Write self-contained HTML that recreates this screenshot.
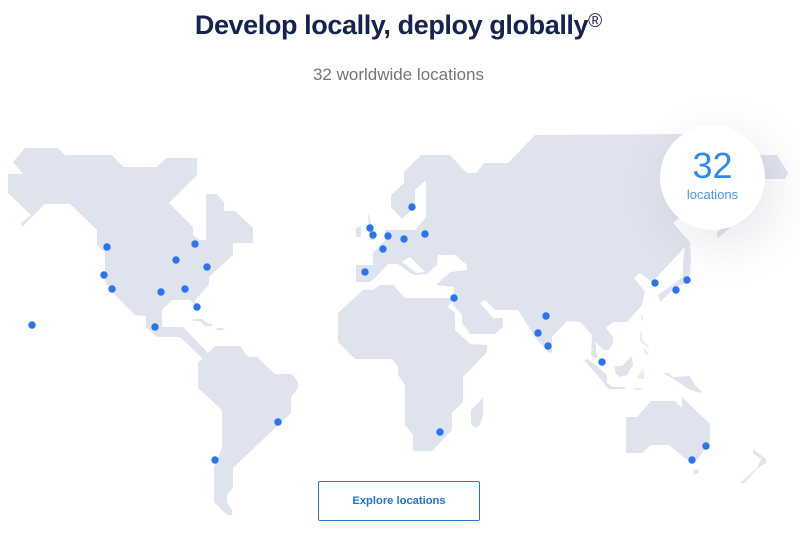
<!DOCTYPE html>
<html><head><meta charset="utf-8"><style>
html,body{margin:0;padding:0;background:#fff}
body{width:800px;height:536px;overflow:hidden;position:relative;font-family:"Liberation Sans",sans-serif}
h1{position:absolute;left:0;top:6px;width:797px;margin:0;text-align:center;font-size:27px;letter-spacing:-.4px;line-height:38px;font-weight:700;color:#14234f;white-space:nowrap}
h1 sup{font-size:19px;font-weight:400;line-height:0;vertical-align:7px;letter-spacing:0}
.s{position:absolute;left:0;top:65px;width:797px;text-align:center;font-size:17px;line-height:20px;color:#70757f}
svg{position:absolute;left:0;top:0;filter:blur(.3px)}
.c{position:absolute;left:660px;top:125px;width:105px;height:105px;border-radius:50%;background:#fff;box-shadow:10px 14px 50px rgba(70,85,130,.14)}
.n{position:absolute;left:0;width:105px;top:20px;text-align:center;font-size:36px;line-height:42px;color:#2f8af0}
.l{position:absolute;left:0;width:105px;top:61px;text-align:center;font-size:13px;line-height:18px;color:#4a92ea}
.b{position:absolute;left:318px;top:481px;width:160px;height:38px;border:1px solid #2379d4;border-radius:2px;text-align:center;font-size:11.2px;font-weight:700;line-height:38px;color:#1c74e0}
</style></head><body>
<h1>Develop locally, deploy globally<sup>®</sup></h1>
<div class="s">32 worldwide locations</div>
<svg width="800" height="536" viewBox="0 0 800 536">
<g fill="#dfe3ee">
<polygon points="25,148 58,148 65,155 112,155 123,167 157,167 166,158 197,158 197,175 169,203 193,227 193,235 200,240 206,240 206,194 217,194 224,202 224,211 235,211 253,228 253,243 233,243 233,255 209,277 209,285 195,300 197,307 190,300 172,300 162,310 162,327 183,327 208,353 203,359 180,337 157,337 146,327 146,316 135,315 113,293 105,282 105,253 97,245 97,230 70,204 45,204 22,227 21,223 31,215 8,193 8,174 23,174 13,162"/>
<polygon points="193,319 202,319 207,323 212,324 212,326 205,326 200,321 193,321"/>
<polygon points="217,328 223,328 224,330 216,330"/>
<polygon points="215,346 240,346 248,357 257,357 275,374 292,374 298,382 298,388 291,397 291,413 233,468 233,488 227,495 227,502 232,510 232,515 227,515 214,502 214,467 222,448 222,410 198,388 198,363"/>
<polygon points="363,290 373,290 380,285 393,285 405,298 454,298 448,307 455,313 455,330 470,344 487,345 487,352 463,377 463,402 452,413 452,430 432,451 413,451 413,435 405,425 405,385 398,375 398,367 392,359 355,359 338,342 338,313"/>
<polygon points="483,398 483,415 480,425 475,428 471,424 471,410"/>
<polygon points="391,195 404,183 404,172 421,155 450,155 467,173 476,173 484,163 508,163 535,135 690,134 740,155 777,155 788,173 785,179 763,179 700,200 673,223 690,242 691,260 690,273 687,282 675,288 660,302 658,295 672,285 683,277 683,263 685,247 657,277 652,282 640,273 634,278 645,292 642,305 627,322 613,322 606,328 613,337 613,343 609,350 603,350 596,342 596,353 598,357 595,358 591,355 592,335 580,322 567,321 552,337 552,353 548,352 535,337 518,310 495,310 485,300 480,303 493,318 503,318 503,327 495,334 470,334 462,323 462,315 453,305 454,287 436,285 450,272 467,270 467,265 455,255 438,255 437,265 427,274 415,275 410,273 398,264 388,264 375,278 370,282 356,282 356,265 373,265 373,253 385,240 385,230 415,230 426,217 426,180 415,190 415,207 402,219 391,207"/>
<polygon points="718,238 730,228 722,228 717,232"/>
<polygon points="368,215 370,240 375,240 372,228 369,215"/>
<polygon points="356,228 361,226 361,237 356,237"/>
<polygon points="584,360 588,359 607,375 607,383 613,387 625,387 625,389 608,389 603,382 597,375"/>
<polygon points="615,366 622,366 632,356 633,365 627,375 620,377 615,373"/>
<g fill="#e8ebf3">
<polygon points="640,332 642,332 642,340 649,346 648,348 640,341"/>
<polygon points="643,347 646,350 649,356 645,354"/>
<polygon points="641,315 643,314 643,320 641,321"/>
<polygon points="640,373 644,369 644,379 638,379 638,376"/>
<polygon points="633,388 644,388 640,390 635,390"/>
</g>
<polygon points="663,373 668,373 673,377 690,376 695,385 703,393 697,392 688,389 680,383 672,378"/>
<polygon points="626,417 637,417 651,401 675,401 682,408 682,397 710,424 710,442 697,460 692,463 683,457 669,445 651,445 642,453 626,453"/>
<polygon points="693,470 699,469 698,473 694,475"/>
<polygon points="753,449 766,459 766,463 758,468 744,483 740,483 757,468 761,459 753,453"/>
</g>
<polygon fill="#fff" points="402,262 410,257 425,272 417,273"/>
<g fill="#2a75ed">
<circle cx="32" cy="325" r="3.7"/><circle cx="107" cy="247" r="3.7"/><circle cx="104" cy="275" r="3.7"/><circle cx="112" cy="289" r="3.7"/><circle cx="155" cy="327" r="3.7"/><circle cx="161" cy="292" r="3.7"/><circle cx="185" cy="289" r="3.7"/><circle cx="176" cy="260" r="3.7"/><circle cx="195" cy="244" r="3.7"/><circle cx="207" cy="267" r="3.7"/><circle cx="197" cy="307" r="3.7"/><circle cx="278" cy="422" r="3.7"/><circle cx="215" cy="460" r="3.7"/><circle cx="412" cy="207" r="3.7"/><circle cx="370" cy="228" r="3.7"/><circle cx="373" cy="235" r="3.7"/><circle cx="388" cy="236" r="3.7"/><circle cx="404" cy="239" r="3.7"/><circle cx="425" cy="234" r="3.7"/><circle cx="383" cy="249" r="3.7"/><circle cx="365" cy="272" r="3.7"/><circle cx="454" cy="298" r="3.7"/><circle cx="440" cy="432" r="3.7"/><circle cx="546" cy="316" r="3.7"/><circle cx="538" cy="333" r="3.7"/><circle cx="548" cy="346" r="3.7"/><circle cx="602" cy="362" r="3.7"/><circle cx="655" cy="283" r="3.7"/><circle cx="676" cy="290" r="3.7"/><circle cx="687" cy="280" r="3.7"/><circle cx="692" cy="460" r="3.7"/><circle cx="706" cy="446" r="3.7"/>
</g>
</svg>
<div class="c"><div class="n">32</div><div class="l">locations</div></div>
<div class="b">Explore locations</div>
</body></html>
